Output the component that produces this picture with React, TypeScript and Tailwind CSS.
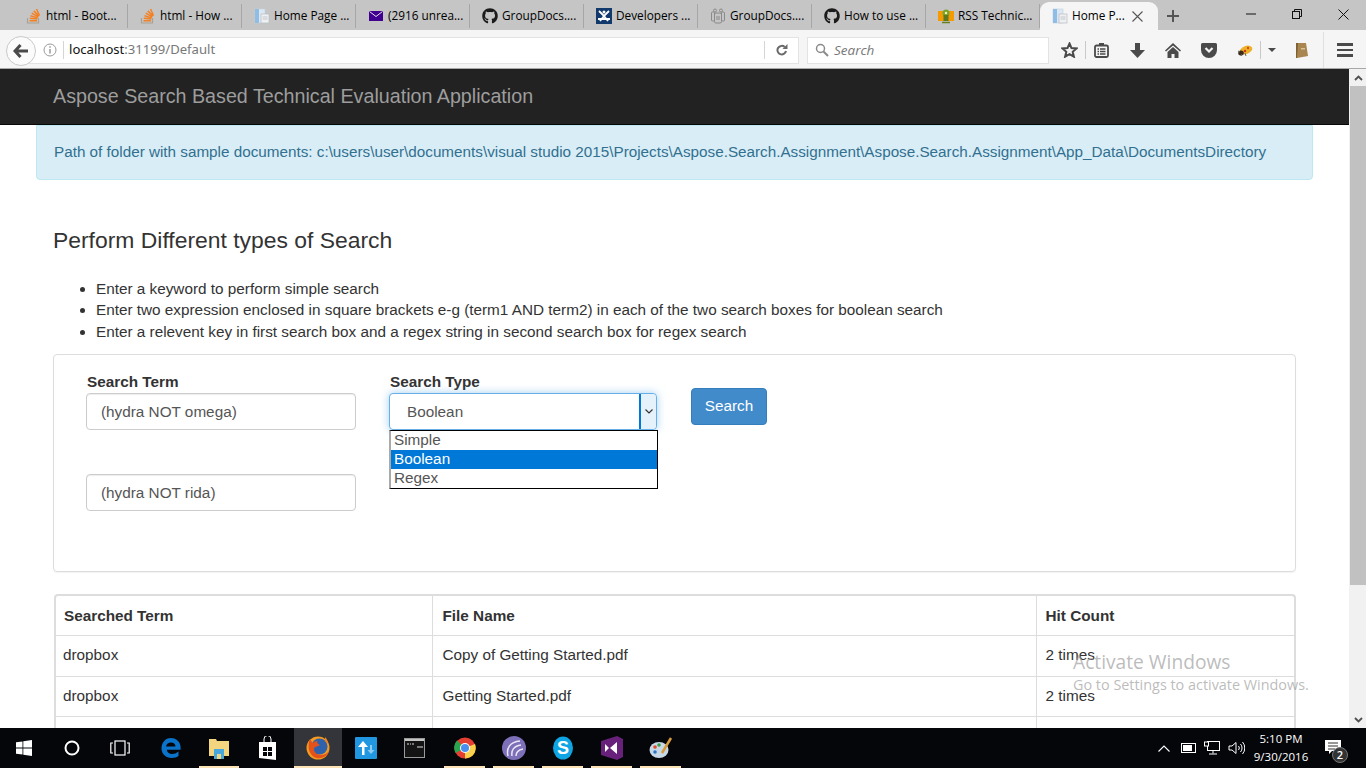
import React from "react";
import { FaGithub } from "react-icons/fa";

const SO = () => (
  <svg width="16" height="16" viewBox="0 0 16 16"><path d="M1.500 10v5h11v-5" fill="none" stroke="#a8a296" strokeWidth="1.200"/><path d="M3.500 12.700h7.500M3.800 10.300l7.500.7M4.500 7.800l7.200 2.100M5.800 5.200l6.500 3.700M7.800 2.900l5.200 5.200M10.500 1l3 6.500" stroke="#f48024" strokeWidth="1.500" fill="none"/></svg>
);
const Doc = () => (
  <svg width="16" height="16" viewBox="0 0 16 16"><rect x="1" y="1" width="10" height="14" fill="#dbe8f4" stroke="#c3cfda" strokeWidth=".6"/><rect x="1" y="1" width="4" height="14" fill="#8fbde6"/><rect x="7" y="6" width="8" height="9" fill="#eef0f2" stroke="#b7bcc2" strokeWidth=".7"/><path d="M8.500 9h5M8.500 11h5" stroke="#c3c7cc"/></svg>
);
const Mail = () => (
  <svg width="16" height="16" viewBox="0 0 16 16"><rect x="1" y="3" width="14" height="10" fill="#400090"/><path d="M1.500 3.500 8 8.500l6.500-5" fill="none" stroke="#e8e0f4" strokeWidth="1"/></svg>
);
const Git = () => <FaGithub size={16} color="#1b1b1b" />;
const Dev = () => (
  <svg width="16" height="16" viewBox="0 0 16 16"><rect width="16" height="16" fill="#12396b"/><path d="M3 3 8 8l5-5M8 8 4 13M8 8l4 5M2 11h12" stroke="#fff" strokeWidth="1.800" fill="none"/><circle cx="8" cy="4" r="1.500" fill="#fff"/></svg>
);
const GD = () => (
  <svg width="16" height="16" viewBox="0 0 16 16" fill="none" stroke="#8a8a8a" strokeWidth="1"><rect x="4.500" y="5" width="7" height="10" rx="1.500"/><rect x="1.500" y="4" width="3" height="9" rx="1"/><rect x="11.500" y="4" width="3" height="9" rx="1"/><circle cx="5" cy="2.500" r="1.500"/><circle cx="11" cy="2.500" r="1.500"/><path d="M6 9h4M6 11h4"/></svg>
);
const RSS = () => (
  <svg width="16" height="16" viewBox="0 0 16 16"><rect y="3" width="16" height="10" fill="#f59a00"/><circle cx="8" cy="5" r="3.500" fill="#7aa52c"/><rect x="5.500" y="7" width="5" height="6" fill="#5d7a22"/><circle cx="8" cy="5" r="1.200" fill="#f4f0c0"/><path d="M4 14.500h8" stroke="#66801e" strokeWidth="1.500"/></svg>
);

const tabs: [React.FC, string][] = [
  [SO, "html - Boot..."],
  [SO, "html - How ..."],
  [Doc, "Home Page ..."],
  [Mail, "(2916 unrea..."],
  [Git, "GroupDocs...."],
  [Dev, "Developers ..."],
  [GD, "GroupDocs...."],
  [Git, "How to use ..."],
  [RSS, "RSS Technic..."],
];

const Tab = ({ icon: I, label }: { icon: React.FC; label: string }) => (
  <div className="w-[114px] h-[24px] flex items-center gap-[4px] pl-[12px] border-r border-[#a6a6a6] shrink-0">
    <span className="w-[16px] h-[16px] shrink-0 flex"><I /></span>
    <span className="text-[11.8px] text-black whitespace-nowrap">{label}</span>
  </div>
);

const TabStrip = () => (
  <div className="h-[30px] pt-[1px] bg-[#c5c5c5] flex items-center font-['Open_Sans',sans-serif] shrink-0">
    <div className="w-[14px] shrink-0" />
    {tabs.map(([i, l], n) => <Tab key={n} icon={i} label={l} />)}
    <div className="w-[118px] h-[28px] self-end bg-[#f5f5f5] rounded-t-[9px] flex items-center pl-[12px] gap-[4px] shrink-0">
      <span className="w-[16px] h-[16px] flex"><Doc /></span>
      <span className="text-[11.8px] text-black whitespace-nowrap">Home P...</span>
      <svg width="11" height="11" viewBox="0 0 11 11" className="ml-auto mr-[15px]"><path d="M.5.500l10 10M10.500.500l-10 10" stroke="#555" strokeWidth="1.100"/></svg>
    </div>
    <svg width="14" height="14" viewBox="0 0 14 14" className="ml-[8px]"><path d="M7 1v12M1 7h12" stroke="#555" strokeWidth="2"/></svg>
    <div className="ml-auto flex items-center h-[26px] self-start text-black">
      <div className="w-[46px] flex justify-center"><svg width="10" height="10" viewBox="0 0 10 10"><path d="M0 5h10" stroke="#111"/></svg></div>
      <div className="w-[46px] flex justify-center"><svg width="10" height="10" viewBox="0 0 10 10" fill="none" stroke="#111"><rect x=".5" y="2.500" width="7" height="7"/><path d="M2.500 2.500v-2h7v7h-2"/></svg></div>
      <div className="w-[46px] flex justify-center"><svg width="11" height="11" viewBox="0 0 11 11"><path d="M.5.500l10 10M10.500.500l-10 10" stroke="#111"/></svg></div>
    </div>
  </div>
);

const ToolIcon = ({ w = 36, children }: { w?: number; children: React.ReactNode }) => (
  <div style={{ width: w }} className="flex items-center justify-center h-full shrink-0">{children}</div>
);

const Toolbar = () => (
  <div className="h-[39px] pt-[2px] bg-[#f5f5f5] border-b border-[#a8a8a8] flex items-center shrink-0 font-['Open_Sans',sans-serif]">
    <div className="ml-[18px] h-[27px] w-[781px] bg-white border border-[#e3e3e3] flex items-center relative">
      <div className="absolute left-[-13px] top-[-2px] w-[30px] h-[30px] rounded-full bg-[#fbfbfb] border border-[#c9c9c9] flex items-center justify-center">
        <svg width="16" height="14" viewBox="0 0 16 14"><path d="M7.500 1 2 7l5.500 6M2.500 7H15" fill="none" stroke="#4a4a4a" strokeWidth="3"/></svg>
      </div>
      <svg width="14" height="14" viewBox="0 0 14 14" className="ml-[24px]"><circle cx="7" cy="7" r="6" fill="none" stroke="#9a9a9a"/><path d="M7 6v4.500M7 3.300v1.500" stroke="#9a9a9a" strokeWidth="1.500"/></svg>
      <div className="ml-[6px] w-px h-[18px] bg-[#d5d5d5]" />
      <span className="ml-[5px] text-[13.1px] text-[#111] whitespace-nowrap font-['Noto_Sans',sans-serif]">localhost<span className="text-[#777]">:31199/Default</span></span>
      <div className="ml-auto w-px h-[18px] bg-[#d5d5d5]" />
      <div className="w-[33px] flex justify-center">
        <svg width="12" height="12" viewBox="0 0 12 12"><path d="M10 7a4.300 4.300 0 1 1-1.300-4" fill="none" stroke="#6a6a6a" strokeWidth="2"/><path d="M11.500 0v5h-5z" fill="#6a6a6a"/></svg>
      </div>
    </div>
    <div className="ml-[8px] h-[27px] w-[242px] bg-white border border-[#e3e3e3] flex items-center shrink-0">
      <svg width="14" height="14" viewBox="0 0 14 14" className="ml-[7px]"><circle cx="5.500" cy="5.500" r="4" fill="none" stroke="#8a8a8a" strokeWidth="1.500"/><path d="M8.500 8.500 13 13" stroke="#8a8a8a" strokeWidth="2"/></svg>
      <span className="ml-[5px] text-[13.5px] italic text-[#777]">Search</span>
    </div>
    <div className="flex items-center h-full ml-[5px] flex-1">
      <ToolIcon w={31}><svg width="17" height="16" viewBox="0 0 17 16"><path d="m8.500 1.500 2 4.600 5 .4-3.800 3.300 1.200 4.900-4.400-2.600-4.400 2.600 1.200-4.900L1.500 6.500l5-.4z" fill="none" stroke="#4a4a4a" strokeWidth="2"/></svg></ToolIcon>
      <div className="w-px h-[18px] bg-[#c9c9c9]" />
      <ToolIcon w={30}><svg width="15" height="15" viewBox="0 0 15 15"><rect x="1" y="2.500" width="13" height="11.500" rx="1.500" fill="none" stroke="#4a4a4a" strokeWidth="1.800"/><path d="M3.500 6h1.500M6 6h5.500M3.500 8.500h1.500M6 8.500h5.500M3.500 11h1.500M6 11h5.500" stroke="#4a4a4a" strokeWidth="1.300"/><rect x="5" y="0" width="5" height="2.500" fill="#4a4a4a"/></svg></ToolIcon>
      <ToolIcon w={42}><svg width="15" height="15" viewBox="0 0 15 15"><path d="M5 0h5v7h5l-7.500 8L0 7h5z" fill="#4a4a4a"/></svg></ToolIcon>
      <ToolIcon w={30}><svg width="16" height="15" viewBox="0 0 16 15"><path d="M8 0 0 7.500l1 1L8 2.500l7 6 1-1z M2.500 9 8 4l5.500 5v6H9.500v-4h-3v4h-4z" fill="#4a4a4a"/></svg></ToolIcon>
      <ToolIcon w={42}><svg width="16" height="15" viewBox="0 0 16 15"><path d="M1.500 0h13A1.500 1.500 0 0 1 16 1.500V7a8 8 0 0 1-16 0V1.500A1.500 1.500 0 0 1 1.500 0z" fill="#4a4a4a"/><path d="m4.500 5 3.500 3.500L11.500 5" fill="none" stroke="#f5f5f5" strokeWidth="2.200"/></svg></ToolIcon>
      <ToolIcon w={30}><svg width="16" height="13" viewBox="0 0 16 13"><ellipse cx="9" cy="6" rx="6.500" ry="4" fill="#eeb22a" transform="rotate(-20 9 6)"/><ellipse cx="4" cy="9" rx="2.800" ry="2.500" fill="#3a2a1a"/><circle cx="8" cy="7" r="1.200" fill="#c43a10"/><circle cx="11" cy="4" r="1.200" fill="#d0501a"/><path d="M1 7l2 1M4 12l1-2M9 12 8 9" stroke="#666"/></svg></ToolIcon>
      <div className="w-px h-[18px] bg-[#c9c9c9]" />
      <ToolIcon w={22}><svg width="8" height="4" viewBox="0 0 8 4"><path d="M0 0h8L4 4z" fill="#4a4a4a"/></svg></ToolIcon>
      <ToolIcon w={38}><svg width="14" height="16" viewBox="0 0 14 16"><path d="M1 1h10l2 13-11 2z" fill="#a9854f"/><path d="M1 1v15h1L3 1z" fill="#7c5f33"/><rect x="6" y="6" width="4" height="1.500" fill="#d7c29a"/></svg></ToolIcon>
      <div className="w-px h-full bg-[#e0e0e0] ml-[2px]" />
      <ToolIcon w={42}><div className="w-[16px] flex flex-col gap-[3px]"><div className="h-[2.500px] bg-[#4a4a4a]" /><div className="h-[2.500px] bg-[#4a4a4a]" /><div className="h-[2.500px] bg-[#4a4a4a]" /></div></ToolIcon>
    </div>
  </div>
);

const fieldCls = "w-[270px] h-[37px] border border-[#ccc] rounded-[4px] flex items-center pl-[14px] pt-[1px] text-[#555] bg-white shadow-[inset_0_1px_1px_rgba(0,0,0,0.075)]";
const th = "border border-[#ddd] text-left font-bold pt-[2px] h-[39px]";
const td = "border border-[#ddd] text-left h-[40px]";

const Page = () => (
  <div className="flex-1 min-h-0 flex relative bg-white">
    <div className="flex-1 min-w-0 overflow-hidden font-['Liberation_Sans',sans-serif] text-[15.3px] text-[#333]">
      <div className="h-[56px] bg-[#222] border-b border-[#080808] flex items-center pl-[53px] text-[19.7px] text-[#9d9d9d]">Aspose Search Based Technical Evaluation Application</div>
      <div className="ml-[36px] w-[1277px] h-[55px] bg-[#d9edf7] border border-[#bce8f1] rounded-b-[4px] flex items-center pl-[17px] text-[15.26px] text-[#31708f] whitespace-nowrap">Path of folder with sample documents: c:\users\user\documents\visual studio 2015\Projects\Aspose.Search.Assignment\Aspose.Search.Assignment\App_Data\DocumentsDirectory</div>
      <h2 className="ml-[53px] mt-[46px] text-[22.9px] leading-[28px] font-normal">Perform Different types of Search</h2>
      <ul className="ml-[96px] mt-[23.6px] list-disc leading-[21.5px]">
        <li>Enter a keyword to perform simple search</li>
        <li>Enter two expression enclosed in square brackets e-g (term1 AND term2) in each of the two search boxes for boolean search</li>
        <li>Enter a relevent key in first search box and a regex string in second search box for regex search</li>
      </ul>
      <div className="ml-[53px] w-[1243px] h-[218px] mt-[12px] border border-[#ddd] rounded-[4px] shadow-[0_1px_1px_rgba(0,0,0,0.05)] flex pl-[32px] pt-[16px]">
        <div className="flex flex-col w-[303px] shrink-0">
          <label className="font-bold leading-[22px] pl-[1px]">Search Term</label>
          <div className={fieldCls}>(hydra NOT omega)</div>
          <div className={`${fieldCls} mt-[44px]`}>(hydra NOT rida)</div>
        </div>
        <div className="flex flex-col w-[302px] shrink-0 relative">
          <label className="font-bold leading-[22px] pl-[1px]">Search Type</label>
          <div className="w-[268px] h-[37px] border border-[#66afe9] rounded-[4px] flex items-center justify-between pl-[17px] text-[#555] bg-white shadow-[0_0_8px_rgba(102,175,233,0.6)]">
            <span className="pt-[1px]">Boolean</span>
            <div className="w-[17px] h-full bg-[#e5f1fb] border-l-2 border-[#0078d7] rounded-r-[4px] flex items-center justify-center">
              <svg width="8" height="5" viewBox="0 0 8 5"><path d="m.5.500 3.500 3.500L7.500.500" fill="none" stroke="#333" strokeWidth="1.200"/></svg>
            </div>
          </div>
          <div className="absolute left-0 top-[59px] w-[269px] h-[59px] bg-white border border-black border-l-[#aaa] border-l-2 text-[#555] leading-[17px] z-10">
            <div className="pl-[3px] pb-[2px]">Simple</div>
            <div className="pl-[3px] pb-[2px] bg-[#0078d7] text-white">Boolean</div>
            <div className="pl-[3px] pb-[2px]">Regex</div>
          </div>
        </div>
        <button className="w-[76px] h-[37px] mt-[17px] bg-[#428bca] border border-[#357ebd] rounded-[4px] text-white text-[15.3px]">Search</button>
      </div>
      <div className="ml-[54px] w-[1242px] mt-[22px] border-2 border-[#ddd] border-b-0 rounded-t-[4px]">
        <table className="w-full border-collapse table-fixed">
          <colgroup><col className="w-[376px]" /><col className="w-[604px]" /><col /></colgroup>
          <thead>
            <tr><th className={`${th} border-t-0 border-l-0 pl-[8px]`}>Searched Term</th><th className={`${th} border-t-0 pl-[10px]`}>File Name</th><th className={`${th} border-t-0 border-r-0 pl-[9px]`}>Hit Count</th></tr>
          </thead>
          <tbody>
            <tr className="h-[41px]"><td className={`${td} border-l-0 pl-[7px]`}>dropbox</td><td className={`${td} pl-[10px]`}>Copy of Getting Started.pdf</td><td className={`${td} border-r-0 pl-[9px]`}>2 times</td></tr>
            <tr><td className={`${td} border-l-0 pl-[7px]`}>dropbox</td><td className={`${td} pl-[10px]`}>Getting Started.pdf</td><td className={`${td} border-r-0 pl-[9px]`}>2 times</td></tr>
            <tr><td className={`${td} border-l-0`}>&nbsp;</td><td className={td}>&nbsp;</td><td className={`${td} border-r-0`}>&nbsp;</td></tr>
          </tbody>
        </table>
      </div>
    </div>
    <div className="w-[17px] shrink-0 bg-[#f1f1f1] flex flex-col items-end">
      <div className="w-[16px] h-[17px] flex items-center justify-center"><svg width="9" height="6" viewBox="0 0 9 6"><path d="M1 5 4.500 1.500 8 5" fill="none" stroke="#505050" strokeWidth="1.800"/></svg></div>
      <div className="w-[16px] h-[499px] bg-[#c1c1c1]" />
      <div className="w-[16px] mt-auto h-[17px] flex items-center justify-center"><svg width="9" height="6" viewBox="0 0 9 6"><path d="M1 1l3.500 3.500L8 1" fill="none" stroke="#505050" strokeWidth="1.800"/></svg></div>
    </div>
    <div className="absolute left-[1073px] top-[580px] font-['Open_Sans',sans-serif] text-[#9e9e9e]/70 pointer-events-none">
      <div className="text-[19.2px] leading-[26px]">Activate Windows</div>
      <div className="text-[14.4px] leading-[20px] whitespace-nowrap">Go to Settings to activate Windows.</div>
    </div>
  </div>
);

const Slot = ({ w = 48, on, active, children }: { w?: number; on?: boolean; active?: boolean; children: React.ReactNode }) => (
  <div style={{ width: w }} className={`h-full flex items-center justify-center shrink-0 relative ${active ? "bg-[#33353a]" : ""}`}>
    {children}
    {on && <div className={`absolute bottom-0 h-[2px] bg-[#fce3b6] ${active ? "left-0 right-0" : "left-[4px] right-[4px]"}`} />}
  </div>
);

const Taskbar = () => (
  <div className="h-[40px] bg-[#05060a] flex items-center shrink-0 font-['Open_Sans',sans-serif] text-white">
    <Slot><svg width="16" height="16" viewBox="0 0 16 16" fill="#fff"><path d="M0 2.300 6.500 1.400v6.200H0zM7.300 1.300 16 0v7.600H7.300zM0 8.400h6.500v6.200L0 13.700zM7.300 8.400H16V16l-8.700-1.200z"/></svg></Slot>
    <Slot><svg width="16" height="16" viewBox="0 0 16 16"><circle cx="8" cy="8" r="6.500" fill="none" stroke="#fff" strokeWidth="2"/></svg></Slot>
    <Slot><svg width="20" height="16" viewBox="0 0 20 16" fill="none" stroke="#fff" strokeWidth="1.200"><rect x="5" y="1" width="10" height="14"/><path d="M3 3H.8v10H3M17 3h2.200v10H17"/></svg></Slot>
    <div className="w-[3px]" />
    <Slot><svg width="20" height="22" viewBox="0 0 20 22"><path d="M10 1C4 1 .5 6 .5 11.500S5 21 10.500 21c3 0 5.500-1 7-2v-4.500c-2 1.700-4 2.500-6.500 2.500-2.800 0-5-1.500-5.200-4.200H19.500C20.500 6.500 16.500 1 10 1zM5 9.500C5.500 7 7.500 5.500 10 5.500s4.500 1.500 4.500 4z" fill="#0a72c9"/></svg></Slot>
    <Slot on><svg width="22" height="22" viewBox="0 0 22 22"><path d="M1 2h7l1 2h12v15H1z" fill="#f3d57f"/><rect x="6" y="12" width="10" height="10" fill="#46a8dc"/><rect x="9" y="17" width="4" height="5" fill="#f3d57f"/></svg></Slot>
    <Slot><svg width="17" height="24" viewBox="0 0 17 24"><path d="M0 6h17v18l-17-2z" fill="#fff"/><path d="M5 6V3a3.500 3.500 0 0 1 7 0v3" fill="none" stroke="#fff"/><path d="M4 11h4v4H4zM9 11h4v4H9zM4 16h4v4H4zM9 16h4v4H9z" fill="#05060a"/></svg></Slot>
    <div className="w-[3px]" />
    <Slot active on>
      <svg width="24" height="24" viewBox="0 0 24 24"><circle cx="12" cy="12" r="11.500" fill="#f39a1f"/><circle cx="13.500" cy="10.500" r="8" fill="#2f62aa"/><path d="M4 3C1.500 9 2 17 8 21c6 3 13 0 15-6-3 4-8 5-12 3-3-2-4-5-2-7 2-1 4-1 5-2-2-1-3-2-3-4-2 0-3 1-4 2C6 6 5 4.500 4 3z" fill="#e4521b"/><path d="M19 1c2 2 3 4 3.500 7-1-1-2-2-3.500-2.500z" fill="#f07f1e"/></svg>
    </Slot>
    <Slot><svg width="22" height="22" viewBox="0 0 22 22"><rect width="22" height="22" rx="1" fill="#2097e0"/><path d="M9 18V10H5l5-6 5 6h-3.500v8z" fill="#fff" transform="translate(-2 0)"/><path d="M15 8v5h-2.500l3.500 4 3.500-4H17V8z" fill="#8ecbf2"/></svg></Slot>
    <Slot><svg width="21" height="20" viewBox="0 0 21 20"><rect x=".5" y=".5" width="20" height="19" fill="#141414" stroke="#9a9a9a"/><rect x="1" y="1" width="19" height="2" fill="#c4c4c4"/><path d="M3 6h2M6 6h1M8 6h2M13 9h6" stroke="#ddd" strokeWidth="1.200"/></svg></Slot>
    <div className="w-[2px]" />
    <Slot w={49} on><svg width="22" height="22" viewBox="0 0 22 22"><circle cx="11" cy="11" r="10.500" fill="#e53f32"/><path d="M11 11 1.500 16A10.500 10.500 0 0 1 3 3.500z" fill="#2aa44e"/><path d="M21 7a10.500 10.500 0 0 1-10 14.500L11 11z" fill="#fad24b"/><circle cx="11" cy="11" r="5" fill="#fff"/><circle cx="11" cy="11" r="4" fill="#4a8ff0"/></svg></Slot>
    <Slot w={49} on><svg width="24" height="24" viewBox="0 0 24 24"><circle cx="12" cy="12" r="12" fill="#7d6fb8"/><path d="M6 20C4 12 8 6 18 5M10 20c-1-6 2-10 9-11M14 20c0-4 2-6 7-7" fill="none" stroke="#ece8f8" strokeWidth="1.500"/></svg></Slot>
    <Slot w={49} on><svg width="22" height="24" viewBox="0 0 22 24"><ellipse cx="11" cy="12" rx="10" ry="11.500" fill="#0ea5e4"/><text x="11" y="18" textAnchor="middle" fontSize="18" fontWeight="700" fill="#fff" fontFamily="Liberation Sans">S</text></svg></Slot>
    <Slot w={49} on><svg width="22" height="24" viewBox="0 0 22 24"><path d="M0 5 16 0l6 3v18l-6 3L0 19z" fill="#68217a"/><path d="M4 8l4 4-4 4zM16 6v12L9 12z" fill="#fff"/></svg></Slot>
    <Slot w={49} on><svg width="24" height="24" viewBox="0 0 24 24"><ellipse cx="10" cy="14" rx="9.500" ry="8" fill="#c7d8e6"/><circle cx="6" cy="11" r="1.800" fill="#e2492c"/><circle cx="10" cy="9" r="1.800" fill="#3c9d4a"/><circle cx="6" cy="16" r="1.800" fill="#2b75c7"/><path d="M13 17 22 2" stroke="#d99a3c" strokeWidth="2.500"/></svg></Slot>
    <div className="ml-auto flex items-center h-full">
      <svg width="12" height="7" viewBox="0 0 12 7"><path d="M.5 6.500 6 1l5.500 5.500" fill="none" stroke="#fff" strokeWidth="1.100"/></svg>
      <svg width="16" height="10" viewBox="0 0 16 10" className="ml-[11px]"><rect x=".5" y=".5" width="14" height="9" fill="none" stroke="#fff"/><rect x="2" y="2" width="9" height="6" fill="#fff"/></svg>
      <svg width="16" height="14" viewBox="0 0 16 14" fill="none" stroke="#fff" className="ml-[7px]"><rect x="3.500" y=".5" width="12" height="9"/><path d="M9 9.500v3M5 13h8"/><rect x=".5" y="1" width="4" height="4" fill="#05060a"/></svg>
      <svg width="17" height="14" viewBox="0 0 17 14" fill="none" stroke="#fff" className="ml-[8px]"><path d="M1 5v4h3l4 3.500v-11L4 5z"/><path d="M10.500 5a3 3 0 0 1 0 4M12.500 3a6 6 0 0 1 0 8M14.500 1a9 9 0 0 1 0 12"/></svg>
      <div className="ml-[4px] w-[64px] text-[11.5px] leading-[18px] text-center whitespace-nowrap">
        <div>5:10 PM</div><div>9/30/2016</div>
      </div>
      <div className="ml-[11px] mr-[18px] relative w-[24px] h-[30px]">
        <svg width="16" height="14" viewBox="0 0 16 14" className="absolute left-[1px] top-[7px]"><path d="M0 0h16v11H7l-3 3v-3H0z" fill="#fff"/><path d="M3 3h10M3 6h10M3 9h7" stroke="#333"/></svg>
        <div className="absolute left-[8px] top-[14px] w-[16px] h-[16px] rounded-full bg-[#333] border border-[#777] text-[11px] leading-[14px] text-center font-semibold">2</div>
      </div>
    </div>
  </div>
);

export default function App() {
  return (
    <div className="w-[1366px] h-[768px] flex flex-col overflow-hidden bg-white">
      <TabStrip />
      <Toolbar />
      <Page />
      <Taskbar />
    </div>
  );
}
